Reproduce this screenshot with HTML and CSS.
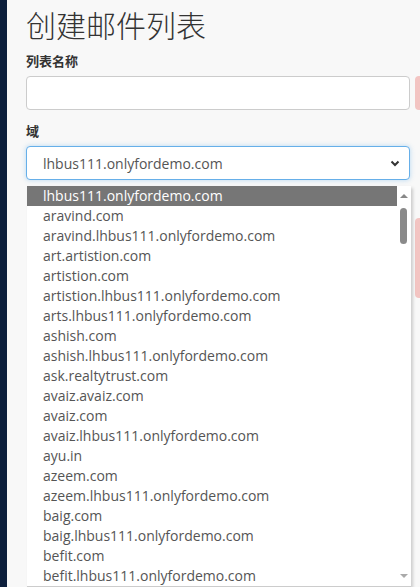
FILE: index.html
```html
<!DOCTYPE html>
<html lang="zh-CN">
<head>
    <meta charset="UTF-8">
    <meta name="viewport" content="width=device-width, initial-scale=1.0">
    <title>创建邮件列表</title>
    <link rel="stylesheet" href="styles.css">
</head>
<body>
    <div class="frame">
        <div class="sidebar"></div>
        <main class="content">
            <h1>创建邮件列表</h1>

            <div class="form-group">
                <label for="listName">列表名称</label>
                <div class="field-row">
                    <input type="text" id="listName" class="form-control">
                    <span class="hint-tab"></span>
                </div>
            </div>

            <div class="form-group">
                <label>域</label>
                <div class="field-row">
                    <div class="select-wrap">
                        <div class="select-box">
                            <span>lhbus111.onlyfordemo.com</span>
                            <svg class="chevron" width="10" height="7" viewBox="0 0 10 7">
                                <path d="M1.5 1.5 L5 5 L8.5 1.5" fill="none" stroke="#333" stroke-width="2"/>
                            </svg>
                        </div>

                        <!-- open option list -->
                        <div class="options">
                            <ul class="option-list" id="domainList"></ul>
                            <div class="scrollbar">
                                <span class="arrow up"></span>
                                <span class="thumb"></span>
                                <span class="arrow down"></span>
                            </div>
                        </div>
                    </div>
                    <span class="hint-tab tall"></span>
                </div>
            </div>
        </main>
    </div>

    <script>
        var domains = [
            'lhbus111.onlyfordemo.com',
            'aravind.com',
            'aravind.lhbus111.onlyfordemo.com',
            'art.artistion.com',
            'artistion.com',
            'artistion.lhbus111.onlyfordemo.com',
            'arts.lhbus111.onlyfordemo.com',
            'ashish.com',
            'ashish.lhbus111.onlyfordemo.com',
            'ask.realtytrust.com',
            'avaiz.avaiz.com',
            'avaiz.com',
            'avaiz.lhbus111.onlyfordemo.com',
            'ayu.in',
            'azeem.com',
            'azeem.lhbus111.onlyfordemo.com',
            'baig.com',
            'baig.lhbus111.onlyfordemo.com',
            'befit.com',
            'befit.lhbus111.onlyfordemo.com'
        ];

        var list = document.getElementById('domainList');
        domains.forEach(function (name, i) {
            var li = document.createElement('li');
            li.textContent = name;
            if (i === 0) li.className = 'selected';
            list.appendChild(li);
        });
    </script>
</body>
</html>
```

FILE: styles.css
```css
* {
    box-sizing: border-box;
}

body {
    margin: 0;
    background: #f8f8f8;
    font-family: "Open Sans", "Noto Sans CJK SC", sans-serif;
    color: #333;
    overflow: hidden;
}

.frame {
    display: flex;
    min-height: 587px;
}

.sidebar {
    width: 7px;
    flex-shrink: 0;
    background: #0d1f3c;
}

.content {
    flex: 1;
    padding-left: 19px;
    min-width: 0;
}

h1 {
    margin: 4px 0 7px;
    font-family: "Noto Sans CJK SC", sans-serif;
    font-weight: 300;
    font-size: 30px;
    line-height: 40px;
    color: #333;
}

.form-group {
    margin-bottom: 11px;
}

label {
    display: block;
    font-family: "Noto Sans CJK SC", sans-serif;
    font-weight: bold;
    font-size: 13px;
    line-height: 20px;
    margin-bottom: 5px;
}

.field-row {
    display: flex;
    align-items: flex-start;
    gap: 5px;
}

.form-control {
    width: 384px;
    height: 34px;
    flex-shrink: 0;
    border: 1px solid #ccc;
    border-radius: 4px;
    background: #fff;
    padding: 6px 16px;
    font: inherit;
}

.hint-tab {
    width: 20px;
    height: 34px;
    flex-shrink: 0;
    background: #f3c4c2;
    border-radius: 4px;
}

.hint-tab.tall {
    height: 80px;
    margin-top: 72px;
}

.select-wrap {
    position: relative;
    width: 384px;
    flex-shrink: 0;
}

.select-box {
    height: 34px;
    display: flex;
    align-items: center;
    justify-content: space-between;
    padding: 0 9px 0 16px;
    background: #fff;
    border: 1px solid #66afe9;
    border-radius: 4px;
    box-shadow: 0 0 5px rgba(102, 175, 233, 0.45);
    font-size: 14px;
    color: #555;
}

.options {
    position: absolute;
    top: 40px;
    left: 1px;
    width: 384px;
    display: flex;
    background: #fff;
    border-bottom: 1px solid #ccc;
    box-shadow: 2px 2px 3px rgba(0, 0, 0, 0.18);
}

.option-list {
    list-style: none;
    margin: 0;
    padding: 0;
    flex: 1;
}

.option-list li {
    height: 20px;
    line-height: 20px;
    padding-left: 16px;
    font-size: 14px;
    color: #555;
    white-space: nowrap;
}

.option-list li.selected {
    background: #767676;
    color: #fff;
}

.scrollbar {
    width: 14px;
    position: relative;
    background: #fff;
}

.thumb {
    position: absolute;
    top: 22px;
    left: 3px;
    width: 7px;
    height: 36px;
    border-radius: 4px;
    background: #8a8a8a;
}

.arrow {
    position: absolute;
    left: 3px;
    width: 0;
    height: 0;
    border-left: 4px solid transparent;
    border-right: 4px solid transparent;
}

.arrow.up {
    top: 8px;
    border-bottom: 4px solid #888;
}

.arrow.down {
    bottom: 8px;
    border-top: 4px solid #aaa;
}
```
